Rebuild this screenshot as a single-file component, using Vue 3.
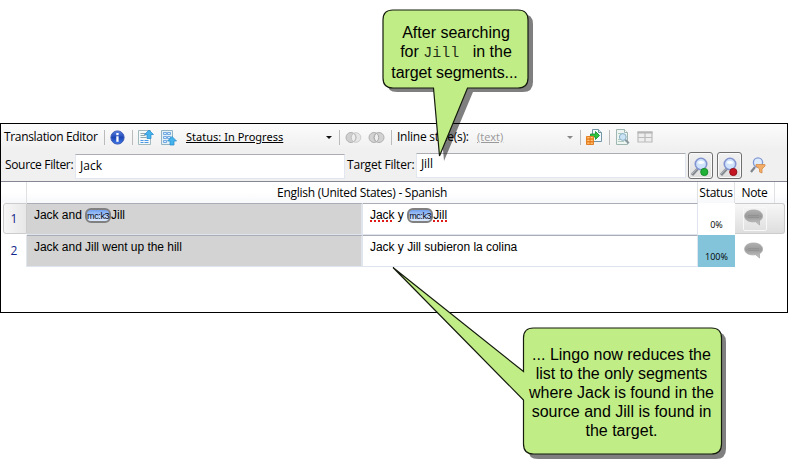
<script setup>
const rows = [
  { n: 1, source: ['Jack and ', 'Jill'], target: ['Jack', ' y ', 'Jill'], tag: 'mc:k3', status: '0%', active: true },
  { n: 2, sourceText: 'Jack and Jill went up the hill', targetText: 'Jack y Jill subieron la colina', status: '100%', active: false },
]
</script>

<template>
  <main class="page">
    <section class="editor">
      <header class="toolbar">
        <span class="title">Translation Editor</span>
        <i class="sep s1"></i>
        <svg class="ic info" width="15" height="15" viewBox="0 0 15 15">
          <defs><linearGradient id="blue" x2="0" y2="1"><stop stop-color="#5b83e6" /><stop offset=".5" stop-color="#1d46b5" /><stop offset="1" stop-color="#3f7bea" /></linearGradient></defs>
          <circle cx="7.5" cy="7.5" r="6.6" fill="url(#blue)" stroke="#3f5cb5" />
          <rect x="6.3" y="3" width="2.3" height="2.2" fill="#fff" /><path d="M6.3 6.300h2.300v5.500H6.300z" fill="#fff" />
        </svg>
        <i class="sep s2"></i>
        <svg class="ic up1" width="17" height="17" viewBox="0 0 17 17">
          <path d="M.5 1.500h12v14H.5z" fill="#f3f8f8" stroke="#a2b9bd" />
          <path d="M2.500 4.500h5M2.500 6.500h5M2.500 8.500h6" stroke="#91a9ae" /><path d="M2.500 11.500h3m1 0h4M2.500 13.500h3m1 0h4" stroke="#4c97e6" />
          <path d="M11 1L15.500 5.500H13v4H9v-4H6.500z" fill="#46b4ec" stroke="#2086cc" stroke-width=".7" />
        </svg>
        <svg class="ic up2" width="17" height="17" viewBox="0 0 17 17">
          <path d="M.5 1.500h11v14H.5z" fill="#e4f1f6" stroke="#91b3c4" />
          <path d="M2.500 3.500h3v2h-3zm4 0h3v2h-3zM2.500 7.500h3v2h-3zm4 0h3v2h-3zM2.500 11.500h3v2h-3z" fill="#d5efff" stroke="#5a97dc" stroke-width=".8" />
          <path d="M11 7.500L15.500 12H13v4H9v-4H6.500z" fill="#46b4ec" stroke="#2086cc" stroke-width=".7" />
        </svg>
        <span class="status-pick">Status: In Progress</span>
        <i class="arrow a1"></i>
        <i class="sep s3"></i>
        <svg class="ic rings1" width="17" height="13" viewBox="0 0 17 13"><circle cx="11" cy="6.500" r="4.800" fill="#e6e6e6" stroke="#ccc" /><circle cx="6" cy="6.500" r="5" fill="#cfcfcf" stroke="#b2b2b2" /><path d="M8.500 2.300a5 5 0 0 0 0 8.400a5 5 0 0 0 0-8.400" fill="#eee" stroke="#b8b8b8" stroke-width=".8" /></svg>
        <svg class="ic rings2" width="17" height="13" viewBox="0 0 17 13"><circle cx="6" cy="6.500" r="5" fill="#d2d2d2" stroke="#b0b0b0" /><circle cx="11" cy="6.500" r="5" fill="#d2d2d2" stroke="#b0b0b0" /><path d="M8.500 2.300a5 5 0 0 0 0 8.400a5 5 0 0 0 0-8.400" fill="#eee" stroke="#aaa" /></svg>
        <i class="sep s4"></i>
        <span class="inline-label">Inline style(s):</span>
        <span class="text-pick">(text)</span>
        <i class="arrow pale a2"></i>
        <i class="sep s5"></i>
        <svg class="ic exp" width="17" height="16" viewBox="0 0 17 16">
          <path d="M6.500.5h6l3 3v9h-9z" fill="#f2fbff" stroke="#7294a5" /><path d="M12.500.5v3h3" fill="#cce4ee" stroke="#7294a5" />
          <path d="M4.500 5h5V2.500L13.500 6.500l-4 4V8h-5z" fill="#30c341" stroke="#0c8d25" stroke-width=".8" />
          <path d="M.5 7.500h7v8h-7z" fill="#ff9f3b" stroke="#e07f25" /><path d="M1 10h6M1 12.800h6M4 7.500v8" stroke="#dd7419" /><path d="M1.500 8.700h2m1.200 0h2M1.500 11.400h2m1.200 0h2M1.500 14.200h2m1.200 0h2" stroke="#ffd498" stroke-width=".8" />
        </svg>
        <i class="sep s6"></i>
        <svg class="ic doc" width="16" height="16" viewBox="0 0 16 16">
          <path d="M1.500.5h8l3 3v12h-11z" fill="#edf5f2" stroke="#9fb6b1" /><path d="M9.500.5v3h3" fill="#fff" stroke="#9fb6b1" /><path d="M3 4.500h5M3 12.500h6M3 10.500h3" stroke="#b0cbbb" />
          <path d="M10 10.500l3.800 3.700" stroke="#89979f" stroke-width="2" /><circle cx="7.800" cy="8" r="3.400" fill="#cae4f6" stroke="#8cafc5" />
        </svg>
        <svg class="ic table" width="16" height="12" viewBox="0 0 16 12"><path d="M1 1h14v10H1zM1 6.500h14M8 2v9" fill="#eee" stroke="#bcbcbc" stroke-width="1.200" /><path d="M.5 1.500h15" stroke="#b5b5b5" stroke-width="2" /></svg>
      </header>

      <div class="filters">
        <span class="src-label">Source Filter:</span>
        <div class="field f1">Jack</div>
        <span class="tgt-label">Target Filter:</span>
        <div class="field f2">Jill</div>
        <button v-for="c in ['green', 'red']" :key="c" class="find" :class="c">
          <svg width="20" height="20" viewBox="0 0 20 20">
            <path d="M2 18l5.500-6" stroke="#858a91" stroke-width="3" /><path d="M2 17l5-5.500" stroke="#b8bdc4" />
            <circle cx="11" cy="7" r="5.700" fill="#cfe2fb" stroke="#8293cf" stroke-width="1.600" /><path d="M7.500 6a3.800 3.800 0 0 1 7 0q-3.500 2-7 0" fill="#f8fdff" />
            <circle class="dot" cx="14.300" cy="15" r="3.600" />
          </svg>
        </button>
        <svg class="funnel" width="16" height="17" viewBox="0 0 16 17">
          <path d="M1 15l4-5" stroke="#7e858f" stroke-width="2.200" /><circle cx="8" cy="5.500" r="4.600" fill="#dcebfd" stroke="#7f97d3" stroke-width="1.300" />
          <path d="M6 7.500h9v1.500l-3 3v4l-2.500-1v-3L6 9z" fill="#f2ad68" stroke="#d48b49" stroke-width=".8" />
        </svg>
      </div>

      <div class="grid head">
        <span class="h0"></span><span class="h1">English (United States) - Spanish</span><span class="h2">Status</span><span class="h3">Note</span><span></span>
      </div>

      <div v-for="r in rows" :key="r.n" class="grid row" :class="{ active: r.active }">
        <span class="num">{{ r.n }}</span>
        <div class="cell source">
          <template v-if="r.tag"><span>{{ r.source[0] }}</span><b class="tag">{{ r.tag }}</b><span>{{ r.source[1] }}</span></template>
          <span v-else>{{ r.sourceText }}</span>
        </div>
        <div class="cell target">
          <template v-if="r.tag"><u>{{ r.target[0] }}</u><span>{{ r.target[1] }}</span><b class="tag">{{ r.tag }}</b><u>{{ r.target[2] }}</u></template>
          <span v-else>{{ r.targetText }}</span>
        </div>
        <div class="pct">{{ r.status }}</div>
        <div class="note">
          <i class="note-box">
            <svg width="20" height="17" viewBox="0 0 20 17">
              <defs><linearGradient id="bub" x2="0" y2="1"><stop stop-color="#b0b0b0" /><stop offset=".45" stop-color="#999" /><stop offset="1" stop-color="#c8c8c8" /></linearGradient></defs>
              <path d="M9.500 1C14.500 1 18.500 3.200 18.500 7c0 2.100-1 3.700-3 4.700v4.300l-3.700-3.300C5.500 13.500.7 11.500.7 7 .7 3.200 4.500 1 9.500 1z" fill="url(#bub)" stroke="#a8a8a8" stroke-width=".8" />
              <path d="M4 6.500h11M4 8.500h11" stroke="#8c8c8c" stroke-width=".6" />
            </svg>
          </i>
        </div>
      </div>
    </section>

    <svg class="shapes" width="788" height="469" viewBox="0 0 788 469">
      <g fill="#000" fill-opacity=".5">
        <path d="M397 14h126q10 0 10 10v58q0 10-10 10h-50l-29 69l-6-69h-41q-10 0-10-10V24q0-10 10-10z" />
        <path d="M538 332h178q10 0 10 10v107q0 10-10 10H538q-10 0-10-10V342q0-10 10-10z" />
      </g>
      <g fill="#c1ed86" stroke="#151b0d" stroke-width="1.200">
        <path d="M393 10h125q10 0 10 10v58q0 10-10 10h-50.500L439.500 156l-6-68H393q-10 0-10-10V20q0-10 10-10z" />
        <path d="M533.500 328H711.500q10 0 10 10v106q0 10-10 10H533.500q-10 0-10-10v-44L393 267.500L523.500 371.500V338q0-10 10-10z" />
      </g>
    </svg>
    <div class="callout top">
      <p>After searching</p><p>for <code>Jill </code> in the</p><p class="t3">target segments...</p>
    </div>
    <div class="callout bottom">
      <p>... Lingo now reduces the</p><p>list to the only segments</p><p>where Jack is found in the</p><p>source and Jill is found in</p><p>the target.</p>
    </div>
  </main>
</template>

<style>
body { margin: 0; background: #fff; }
</style>
<style scoped>
* { box-sizing: border-box; }
.page { position: relative; width: 788px; height: 469px; padding-top: 123px; overflow: hidden; background: #fff; font: 12px/16px "Open Sans", "Noto Sans", sans-serif; color: #000; }
.editor { width: 788px; height: 190px; border: 1px solid #000; background: #fff; }
.toolbar, .filters { display: flex; white-space: nowrap; }
.toolbar > *, .filters > * { flex: none; }
.toolbar { height: 27px; align-items: center; padding-bottom: 1px; background: linear-gradient(#fcfcfc, #efefef); }
.title { width: 99px; padding-left: 3px; letter-spacing: -.33px; }
.sep { width: 1px; height: 15px; background: #bbb; margin-right: 6px; margin-left: 4px; }
.s1 { margin-right: 5px; }
.info { margin-right: 3px; }
.s2 { margin-right: 5px; }
.up1 { margin-right: 6px; }
.status-pick { width: 98px; margin-left: 8px; font-family: "Noto Sans", sans-serif; font-size: 11px; text-decoration: underline; letter-spacing: .02px; }
.arrow { width: 0; height: 0; border: 3px solid transparent; border-top-color: #111; border-bottom: 0; }
.a1 { margin-left: 42px; }
.s3 { margin: 0 5px 0 7px; }
.rings2 { margin-left: 6px; }
.s4 { margin: 0 5px 0 6px; }
.inline-label { width: 73px; letter-spacing: -.25px; }
.text-pick { width: 29px; margin-left: 7px; color: #999; font-size: 11px; text-decoration: underline; }
.a2 { margin-left: 61px; border-top-color: #888; }
.s5 { margin: 0 5px 0 7px; }
.s6 { margin: 0 5px 0 6px; }
.table { margin-left: 6px; }
.filters { height: 30px; align-items: flex-start; background: #f0f0f0; padding-top: 1px; }
.src-label { width: 74px; padding: 5px 0 0 4px; letter-spacing: -.34px; }
.tgt-label { width: 71px; padding: 5px 0 0 2px; letter-spacing: -.2px; }
.field { height: 25px; border: 1px solid #e2e6ee; border-top-color: #abadb3; background: #fff; padding: 4px 0 0 4px; font-size: 12px; }
.f1 { width: 270px; margin-top: 2px; padding-top: 3px; }
.f2 { width: 270px; margin-top: 1px; padding-top: 2px; letter-spacing: -.1px; }
.find { width: 25px; height: 27px; margin: 0 0 0 2px; padding: 2px 0 0 1px; border: 1px solid #707070; border-radius: 3px; background: linear-gradient(#f2f2f2, #dedede); box-shadow: inset 0 0 0 1px #fafafa; }
.find svg { display: block; }
.green .dot { fill: #1fb236; stroke: #168b29; }
.red { margin-left: 4px; }
.red .dot { fill: #c61522; stroke: #941019; }
.funnel { margin: 5px 0 0 8px; }
.grid { display: grid; grid-template-columns: 26px 671px 37px 40px 1fr; }
.head { height: 22px; border-top: 1px solid #858793; background: linear-gradient(#fff 50%, #f7f8fa); text-align: center; }
.head span { border-right: 1px solid #dfe1e5; padding-top: 3px; white-space: nowrap; letter-spacing: -.27px; }
.head span:last-child { border: 0; }
.row { grid-template-columns: 26px 336px 335px 37px 1fr; height: 32px; padding-right: 2px; }
.num { padding: 8px 0 0 1px; text-align: center; color: #15278a; border-right: 1px solid #e1e5ec; }
.active .num { background: linear-gradient(90deg, #f7f7f7, #e7e7e7); border: 1px solid #ccc; border-radius: 3px 0 0 3px; height: 31px; margin-left: 2px; padding: 7px 2px 0 0; }
.cell { display: flex; align-items: flex-start; height: 32px; padding: 4px 0 0 7px; border-top: 1px solid #aaadb5; border-bottom: 1px solid #dfe5ee; font: 12px/14px "Liberation Sans", Arial, sans-serif; white-space: pre; letter-spacing: -.03px; }
.source { background: #d3d3d3; border-right: 2px solid #e0e4ed; }
.target { border-right: 1px solid #dfe5ee; }
.cell u { text-decoration: underline dotted #e01919 1.500px; text-underline-offset: 1px; }
.tag { width: 26px; height: 15px; border: 2px solid #808080; border-radius: 6px; background: linear-gradient(#72a1ef, #b9d3fa 60%, #dce9ff); font: 9px/12px "Liberation Sans", sans-serif; letter-spacing: -.4px; text-align: center; color: #050510; }
.pct { padding-top: 14px; text-align: center; font: 9px/16px "Open Sans", sans-serif; }
.row:not(.active) .pct { background: #84c4db; }
.note { padding-left: 8px; padding-top: 2px; }
.active .note { height: 31px; padding-top: 0; background: linear-gradient(#f7f7f7, #dedede); border: 1px solid #ccc; border-left: 0; border-radius: 0 3px 3px 0; }
.note-box { display: block; width: 24px; height: 24px; margin-top: 3px; padding: 2px 1px; }
.active .note-box { padding: 1px 0; border: 1px solid #f8f8f8; border-radius: 2px; }
.note-box svg { display: block; }
.shapes { position: absolute; left: 0; top: 0; }
.callout { position: absolute; text-align: center; font: 16px/19px "Liberation Sans", Arial, sans-serif; white-space: pre; }
.callout p { margin: 0; }
.top { left: 383px; top: 23px; width: 146px; }
.callout .t3 { letter-spacing: -.1px; margin-left: -3px; }
.bottom { left: 522px; top: 345px; width: 199px; }
.callout code { font: 15px/18px "Liberation Mono", monospace; color: #26331a; }
</style>
